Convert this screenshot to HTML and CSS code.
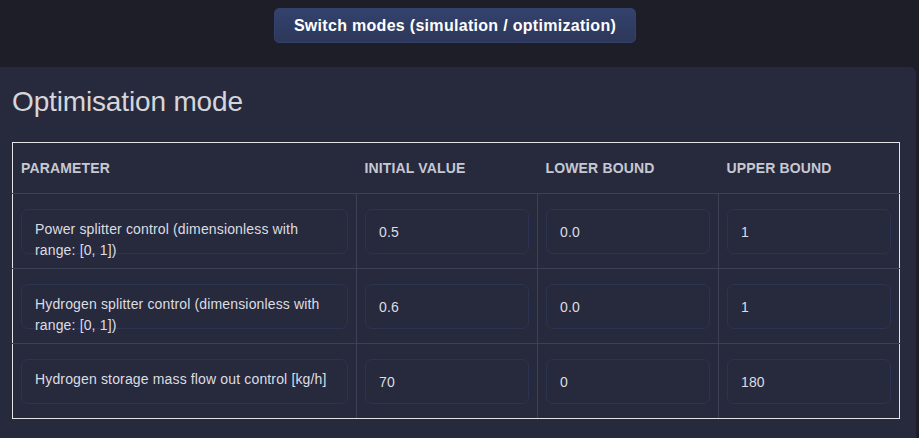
FILE: index.html
```html
<!DOCTYPE html>
<html lang="en">
<head>
<meta charset="utf-8">
<title>Optimisation mode</title>
<link rel="stylesheet" href="styles.css">
</head>
<body>
<header class="topbar">
  <button class="switch-btn" type="button">Switch modes (simulation / optimization)</button>
</header>
<main class="panel">
  <h2 class="panel-title">Optimisation mode</h2>
  <table class="params">
    <colgroup>
      <col class="c-param">
      <col class="c-num">
      <col class="c-num">
      <col class="c-num">
    </colgroup>
    <thead>
      <tr>
        <th>Parameter</th>
        <th>Initial value</th>
        <th>Lower bound</th>
        <th>Upper bound</th>
      </tr>
    </thead>
    <tbody>
      <tr>
        <td><div class="field field-text">Power splitter control (dimensionless with range: [0, 1])</div></td>
        <td><div class="field field-num">0.5</div></td>
        <td><div class="field field-num">0.0</div></td>
        <td><div class="field field-num">1</div></td>
      </tr>
      <tr>
        <td><div class="field field-text">Hydrogen splitter control (dimensionless with range: [0, 1])</div></td>
        <td><div class="field field-num">0.6</div></td>
        <td><div class="field field-num">0.0</div></td>
        <td><div class="field field-num">1</div></td>
      </tr>
      <tr>
        <td><div class="field field-text">Hydrogen storage mass flow out control [kg/h]</div></td>
        <td><div class="field field-num">70</div></td>
        <td><div class="field field-num">0</div></td>
        <td><div class="field field-num">180</div></td>
      </tr>
    </tbody>
  </table>
</main>
</body>
</html>
```

FILE: styles.css
```css
html, body {
  margin: 0;
  padding: 0;
  background: #1d1e28;
  font-family: "Liberation Sans", Arial, sans-serif;
  height: 100%;
  overflow: hidden;
}

.topbar {
  height: 67px;
  box-sizing: border-box;
  padding: 8px 9px 0 0;
  display: flex;
  justify-content: center;
  align-items: flex-start;
}

.switch-btn {
  height: 35px;
  width: 362px;
  padding: 0;
  border: 1px solid #34416a;
  border-radius: 5px;
  background: linear-gradient(to bottom, #33426e, #2d3759);
  color: #ffffff;
  font-family: "Liberation Sans", Arial, sans-serif;
  font-weight: bold;
  font-size: 16px;
  letter-spacing: 0.3px;
  cursor: pointer;
}

.panel {
  margin-right: 3px;
  min-height: 371px;
  background: #272a3d;
  border-radius: 0 6px 0 0;
  padding: 19px 0 0 12px;
  box-sizing: border-box;
}

.panel-title {
  margin: 0 0 24px 0;
  font-size: 28px;
  font-weight: normal;
  line-height: 32px;
  letter-spacing: -0.15px;
  color: #d6d6da;
}

.params {
  width: 887px;
  border-collapse: collapse;
  table-layout: fixed;
  border: 1px solid #e4e4e8;
}

.c-param { width: 344px; }
.c-num { width: 181px; }

.params th {
  text-align: left;
  text-transform: uppercase;
  font-size: 14px;
  font-weight: bold;
  letter-spacing: 0.15px;
  color: #c6c8d2;
  line-height: 18px;
  padding: 16px 8px;
  border-bottom: 1px solid #3e4156;
}

.params td {
  padding: 15px 8px 14px 8px;
  border: 1px solid #3e4156;
  vertical-align: top;
}

.params tbody tr:last-child td {
  border-bottom: 1px solid #e4e4e8;
}

.params td:first-child { border-left: 1px solid #e4e4e8; }
.params td:last-child { border-right: 1px solid #e4e4e8; }

.field {
  box-sizing: border-box;
  height: 45px;
  border: 1px solid #2d3352;
  border-radius: 7px;
  background: #272a3d;
  color: #dcdde2;
  font-size: 14px;
  letter-spacing: 0.15px;
  padding: 0 13px;
}

.field-text {
  padding-top: 9px;
  line-height: 20.5px;
  overflow: visible;
}

.field-num {
  display: flex;
  align-items: center;
}
```
